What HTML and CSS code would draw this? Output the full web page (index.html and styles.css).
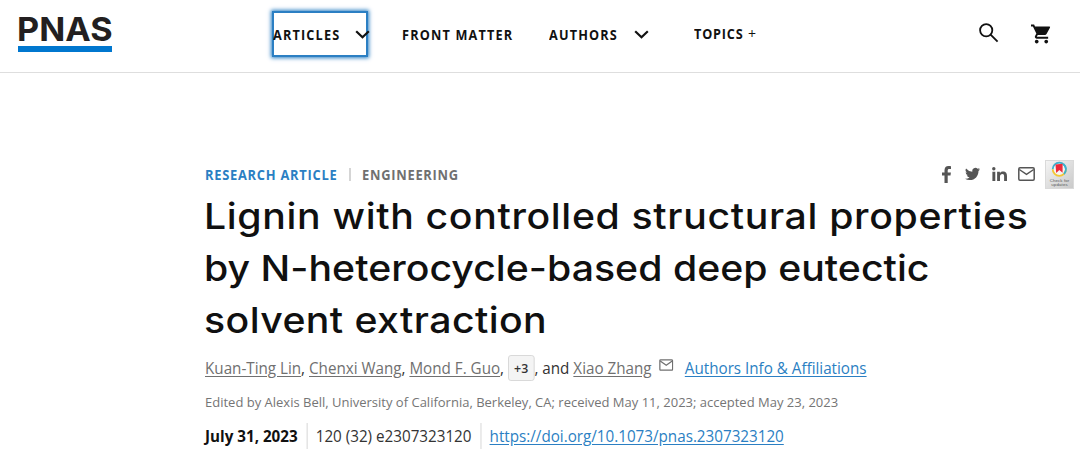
FILE: index.html
```html
<!DOCTYPE html>
<html lang="en">
<head>
<meta charset="utf-8">
<title>PNAS Research Article</title>
<link rel="stylesheet" href="styles.css">
</head>
<body>
<header class="header">
  <a class="logo"><span class="logo-text">PNAS</span></a>
  <nav class="nav">
    <a class="nav-item articles"><span class="label">ARTICLES</span><svg class="chevron" viewBox="0 0 15 9"><path d="M1.2 1.2 7.5 7.3 13.8 1.2"/></svg></a>
    <a class="nav-item front"><span class="label">FRONT MATTER</span></a>
    <a class="nav-item authors"><span class="label">AUTHORS</span><svg class="chevron" viewBox="0 0 15 9"><path d="M1.2 1.2 7.5 7.3 13.8 1.2"/></svg></a>
    <a class="nav-item topics"><span class="label">TOPICS</span><span class="plus">+</span></a>
  </nav>
  <div class="tools">
    <svg class="search" viewBox="0 0 20 20"><circle cx="7.2" cy="7.2" r="6.1"/><path d="M11.6 11.6 18.6 18.6"/></svg>
    <svg class="cart" viewBox="1 2 21 20"><path d="M7 18c-1.1 0-1.99.9-1.99 2S5.900 22 7 22s2-.9 2-2-.9-2-2-2zM1 2v2h2l3.600 7.590-1.350 2.450c-.16.280-.250.610-.250.960 0 1.100.9 2 2 2h12v-2H7.420c-.140 0-.250-.110-.250-.250l.030-.120.900-1.630h7.450c.750 0 1.410-.410 1.750-1.030l3.580-6.490A1 1 0 0 0 20 4H5.210l-.940-2H1zm16 16c-1.100 0-1.990.9-1.990 2s.890 2 1.990 2 2-.9 2-2-.9-2-2-2z"/></svg>
  </div>
</header>
<main class="article">
  <div class="meta">
    <span class="kind">RESEARCH ARTICLE</span><span class="bar"></span><span class="section">ENGINEERING</span>
    <div class="share">
      <svg class="fb" viewBox="0 0 9 17"><path d="M2.500 17V9.500H0V6.500h2.500V4.300C2.500 1.500 4 0 6.400 0 7.600 0 8.700.1 9 .2V2.900H7.300C6 2.900 5.700 3.500 5.700 4.500v2H8.900L8.500 9.500H5.700V17z"/></svg>
      <svg class="tw" viewBox="0 0 24 20"><path d="M24 2.400a10 10 0 0 1-2.800.8A5 5 0 0 0 23.300.5a10 10 0 0 1-3.100 1.200A4.900 4.900 0 0 0 11.800 6.200 14 14 0 0 1 1.700 1a4.900 4.900 0 0 0 1.500 6.600A5 5 0 0 1 1 7v.1a4.900 4.900 0 0 0 3.900 4.800 5 5 0 0 1-2.200.1 4.900 4.900 0 0 0 4.600 3.400A10 10 0 0 1 0 17.500 14 14 0 0 0 7.500 19.700c9.100 0 14.400-7.700 14-14.600A10 10 0 0 0 24 2.400z"/></svg>
      <svg class="li" viewBox="0 0 15 14"><circle cx="1.800" cy="1.700" r="1.700"/><path d="M.4 4.700h2.900V14H.4zM5.100 4.700h2.800V6c.5-.9 1.500-1.500 3-1.500C14 4.500 15 6.300 15 9.200V14h-2.900V9.600c0-1.500-.2-2.600-1.700-2.600S8 8.200 8 9.600V14H5.100z"/></svg>
      <svg class="mail" viewBox="0 0 17 14"><rect x=".8" y=".8" width="15.400" height="12.400" rx="1.200"/><path d="M1.300 2.500 8.500 7.300 15.700 2.500"/></svg>
      <svg class="crossmark" viewBox="0 0 29 29">
        <defs><linearGradient id="badge" x2="1" y2="1"><stop stop-color="#f5f5f5"/><stop offset="1" stop-color="#c9c9c9"/></linearGradient></defs>
        <rect x=".5" y=".5" width="28" height="28" fill="url(#badge)" stroke="#dadada"/>
        <circle cx="14.300" cy="9.300" r="5.800" fill="#f6f4f2"/>
        <path d="M7.700 9.300A6.600 6.600 0 0 1 20.900 9.300" fill="none" stroke="#3db1cd" stroke-width="1.800"/>
        <path d="M7.700 9.300A6.600 6.600 0 0 0 20.900 9.300" fill="none" stroke="#f3c735" stroke-width="1.800"/>
        <path d="M18.500 4.200A6.600 6.600 0 0 1 19 14" fill="none" stroke="#3db1cd" stroke-width="1.800"/>
        <path d="M10.500 4.500 17.600 3.700V12.800L14.300 10 11.200 13z" fill="#ed2939"/>
        <text x="14.500" y="21.900" class="badge-text" textLength="19.500">Check for</text>
        <text x="14.500" y="25.700" class="badge-text" textLength="16.500">updates</text>
      </svg>
    </div>
  </div>
  <h1 class="title"><span class="line one">Lignin with controlled structural properties</span><span class="line two">by N-heterocycle-based deep eutectic</span><span class="line three">solvent extraction</span></h1>
  <div class="people">
    <span><a>Kuan-Ting Lin</a>, <a>Chenxi Wang</a>, <a>Mond F. Guo</a>,</span><span class="more">+3</span><span>, and <a>Xiao Zhang</a></span>
    <svg class="mail small" viewBox="0 0 14 11"><rect x=".7" y=".7" width="12.600" height="9.600" rx=".8"/><path d="M1.100 1.800 7 5.700 12.900 1.800"/></svg>
    <a class="link info">Authors Info &amp; Affiliations</a>
  </div>
  <p class="edited">Edited by Alexis Bell, University of California, Berkeley, CA; received May 11, 2023; accepted May 23, 2023</p>
  <div class="issue"><b class="date">July 31, 2023</b><span class="volume">120 (32) e2307323120</span><a class="link doi">https://doi.org/10.1073/pnas.2307323120</a></div>
</main>
</body>
</html>
```
FILE: styles.css
```css
* { box-sizing: border-box; }
body { margin: 0; width: 1080px; height: 468px; overflow: hidden; background: #fff; font-family: "Open Sans", "Noto Sans", sans-serif; color: #333; }
svg { display: block; flex: none; }
span, a, b { white-space: nowrap; }

.header { display: flex; height: 73px; border-bottom: 1px solid #dedede; }
.logo { width: 94px; height: 36px; margin: 16px 0 0 18px; border-bottom: 6px solid #0077cf; }
.logo-text { display: block; width: 90px; margin-left: -1px; font: 700 33px/27px Inter, sans-serif; color: #231f20; transform: scaleX(1.035); transform-origin: 0 0; }

.nav { display: flex; margin-left: 160px; padding-top: 11px; }
.nav-item { display: flex; align-items: center; height: 46px; font-size: 14px; font-weight: 700; letter-spacing: 1.3px; color: #111; }
.label { transform: scaleX(.905); transform-origin: 0 50%; }
.articles { width: 96px; height: 46px; border: 2px solid #2b7fc3; box-shadow: 0 0 4px 1px #2b7fc3; }
.articles .label { width: 68px; margin-left: -1px; }
.articles .chevron { margin-left: 14px; }
.front { margin-left: 34px; width: 112px; }
.authors { margin-left: 35px; width: 100px; }
.authors .label { width: 70px; }
.authors .chevron { margin-left: 15px; }
.chevron { width: 15px; height: 9px; fill: none; stroke: #111; stroke-width: 2.2; }
.topics { margin-left: 45px; letter-spacing: .9px; padding-bottom: 2px; }
.topics .label { width: 49px; }
.plus { margin-left: 5px; font-weight: 400; }

.tools { display: flex; gap: 32px; margin: 23px 29px 0 auto; }
.search { width: 20px; height: 20px; fill: none; stroke: #111; stroke-width: 1.8; }
.cart { width: 20px; height: 20px; margin-top: 1px; fill: #111; }

.article { padding: 86px 6px 0 205px; }
.meta { display: flex; align-items: center; height: 30px; font-size: 14px; font-weight: 700; letter-spacing: .8px; }
.kind, .section { transform: scaleX(.92); transform-origin: 0 50%; }
.kind { width: 133px; color: #2b7fc3; }
.bar { width: 2px; height: 13px; margin: 0 11px; background: #d5d5d5; }
.section { color: #707070; }
.share { display: flex; align-items: center; margin-left: auto; fill: #555; }
.fb { width: 9px; height: 17px; margin-right: 14px; }
.tw { width: 15px; height: 14px; margin-right: 12px; }
.li { width: 15px; height: 14px; margin-right: 11px; }
.mail { width: 17px; height: 14px; fill: none; stroke: #555; stroke-width: 1.5; }
.crossmark { width: 29px; height: 29px; margin-left: 10px; }
.badge-text { font: 4.3px "Liberation Sans", sans-serif; letter-spacing: 0; text-anchor: middle; fill: #555; }

.title { width: 780px; margin: 1px 0 0 -1px; font: 500 36px/52px Inter, sans-serif; color: #101010; transform: scaleX(1.09); transform-origin: 0 0; }
.line { display: block; }
.one { letter-spacing: .59px; }
.two { letter-spacing: .02px; }
.three { letter-spacing: .37px; }

.people, .issue { transform: scaleX(.95); transform-origin: 0 0; }
.people { display: flex; align-items: center; height: 30px; margin-top: 7px; font-size: 16px; }
.people a:not(.link) { color: #707070; text-decoration: underline; text-underline-offset: 2px; }
.more { width: 28px; height: 26px; margin: 0 0 0 4px; border: 1px solid #d8d8d8; border-radius: 3px; background: #f4f4f4; font-size: 13px; font-weight: 600; line-height: 24px; text-align: center; }
.small { width: 15px; height: 12px; margin: 0 12px 7px 8px; stroke: #707070; stroke-width: 1.3; }
.link { color: #2b7fc3; text-decoration: underline; text-underline-offset: 2px; }
.edited { margin: 9px 0 0; font-size: 13px; line-height: 20px; color: #757575; white-space: nowrap; }
.issue { display: flex; align-items: center; height: 26px; margin-top: 11px; font-size: 16px; line-height: 26px; }
.date { color: #111; padding-right: 9px; border-right: 1px solid #d5d5d5; }
.volume { padding: 0 9px; border-right: 1px solid #d5d5d5; }
.doi { margin-left: 9px; }
```
